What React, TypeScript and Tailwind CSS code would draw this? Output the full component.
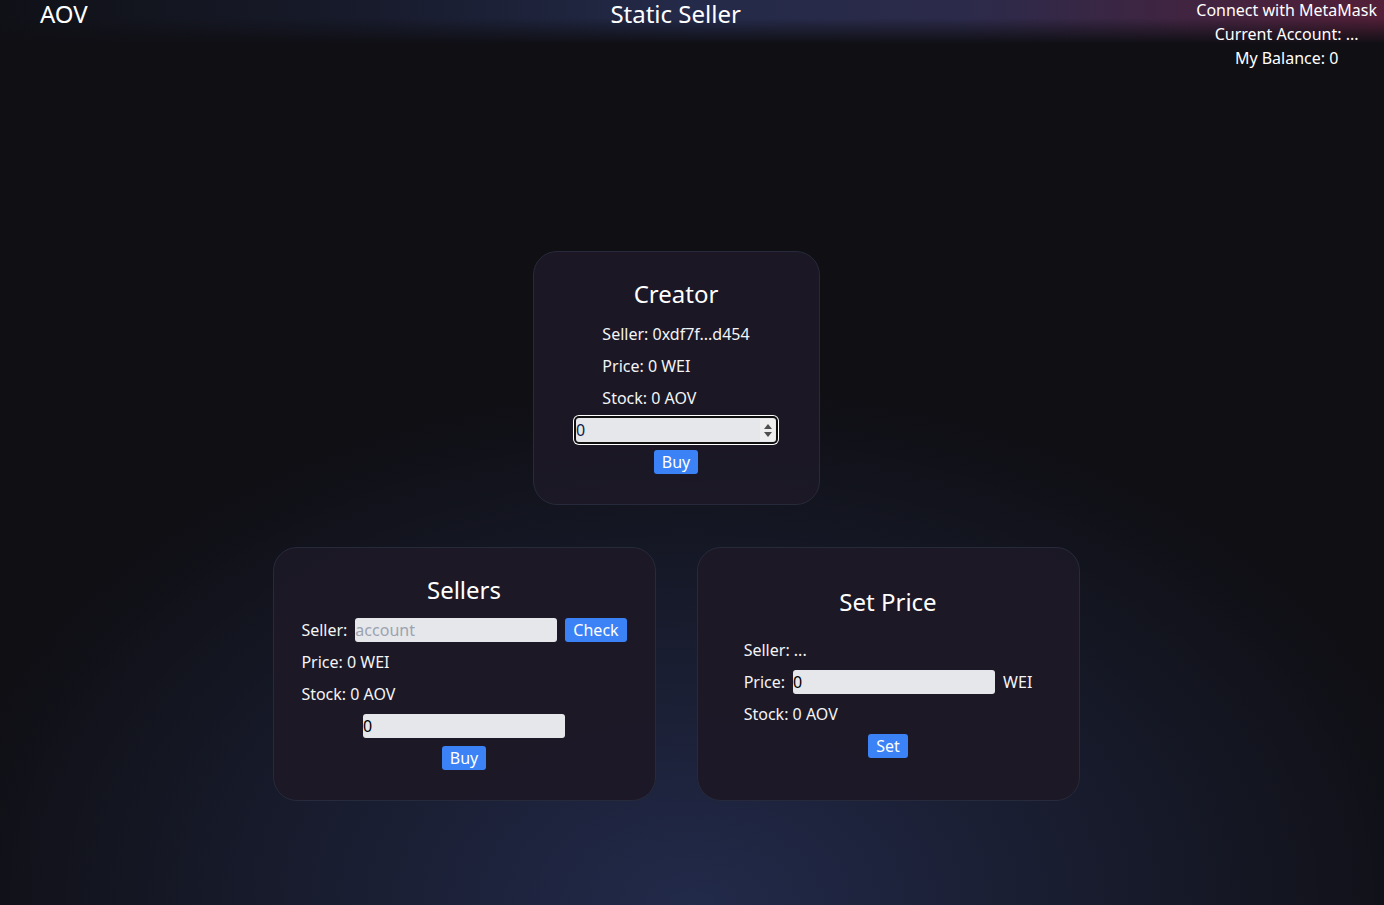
import React from "react";

const font = { fontFamily: '"Noto Sans", "Open Sans", sans-serif' };

function Card({ width, title, titleGap, children }: { width: string; title: string; titleGap: string; children: React.ReactNode }) {
  return (
    <div className={`${width} flex flex-col items-center justify-center rounded-3xl border border-[#262a3a] bg-[#1c1826]/95 pt-[26px] pb-[30px]`}>
      <h2 className={`text-2xl leading-8 text-white ${titleGap}`}>{title}</h2>
      {children}
    </div>
  );
}

function BlueButton({ label }: { label: string }) {
  return (
    <button className="h-6 rounded-[3px] bg-[#3b82f6] px-2 text-base leading-6 text-white">{label}</button>
  );
}

function Spinner() {
  return (
    <div className="flex h-full w-[15px] flex-col items-center justify-center gap-[3px] bg-[#efefef]">
      <svg width="8" height="5" viewBox="0 0 8 5"><path d="M4 0 L8 5 L0 5 Z" fill="#505050" /></svg>
      <svg width="8" height="5" viewBox="0 0 8 5"><path d="M0 0 L8 0 L4 5 Z" fill="#505050" /></svg>
    </div>
  );
}

export default function App() {
  return (
    <div
      className="min-h-screen overflow-hidden bg-[#0f0f14] bg-[radial-gradient(ellipse_760px_520px_at_50%_100%,#222a4a_0%,rgba(15,15,20,0)_100%),linear-gradient(to_bottom,rgba(15,15,20,0)_0px,rgba(15,15,20,0)_18px,#0f0f14_44px),linear-gradient(to_right,#101117_0%,#171a2a_25%,#242a49_50%,#2c2a4a_70%,#531f38_100%)] text-gray-100"
      style={font}
    >
      {/* header */}
      <div className="-mt-0.5 flex items-start">
        <div className="w-[155px] pl-10 text-2xl leading-8 text-white">AOV</div>
        <div className="flex-1 text-center text-2xl leading-8 text-white">Static Seller</div>
        <div className="flex flex-col items-center pr-[7px] text-base leading-6 text-white">
          <button className="leading-6">Connect with MetaMask</button>
          <span>Current Account: ...</span>
          <span>My Balance: 0</span>
        </div>
      </div>

      {/* main */}
      <div className="flex flex-col items-center gap-[42px] pt-[181px] pr-8">
        <Card width="w-[287px]" title="Creator" titleGap="mb-3">
          <div className="flex flex-col items-start gap-2 leading-6">
            <span>Seller: 0xdf7f...d454</span>
            <span>Price: 0 WEI</span>
            <span>Stock: 0 AOV</span>
          </div>
          <div className="mt-2 flex h-6 w-[200px] items-center rounded-[3px] bg-[#e5e7eb] pr-px shadow-[0_0_0_2px_#101010,0_0_0_3px_#ffffff]">
            <input type="text" defaultValue="0" className="h-6 min-w-0 flex-1 bg-transparent text-base leading-6 text-[#10204a] outline-none" />
            <div className="h-[22px]"><Spinner /></div>
          </div>
          <div className="mt-2"><BlueButton label="Buy" /></div>
        </Card>

        <div className="flex gap-[41px]">
          <Card width="w-[383px]" title="Sellers" titleGap="mb-3">
            <div className="flex flex-col items-start gap-2 leading-6">
              <div className="flex items-center gap-2">
                <span>Seller:</span>
                <input type="text" placeholder="account" className="h-6 w-[202px] rounded-[3px] bg-[#e5e7eb] text-base text-black outline-none placeholder:text-[#9ca3af]" />
                <BlueButton label="Check" />
              </div>
              <span>Price: 0 WEI</span>
              <span>Stock: 0 AOV</span>
            </div>
            <input type="text" defaultValue="0" className="mt-2 h-6 w-[202px] rounded-[3px] bg-[#e5e7eb] text-base text-black outline-none" />
            <div className="mt-2"><BlueButton label="Buy" /></div>
          </Card>

          <Card width="w-[383px]" title="Set Price" titleGap="mb-5">
            <div className="flex flex-col items-start gap-2 leading-6">
              <span>Seller: ...</span>
              <div className="flex items-center gap-2">
                <span>Price:</span>
                <input type="text" defaultValue="0" className="h-6 w-[202px] rounded-[3px] bg-[#e5e7eb] text-base text-black outline-none" />
                <span>WEI</span>
              </div>
              <span>Stock: 0 AOV</span>
            </div>
            <div className="mt-2"><BlueButton label="Set" /></div>
          </Card>
        </div>
      </div>
    </div>
  );
}
